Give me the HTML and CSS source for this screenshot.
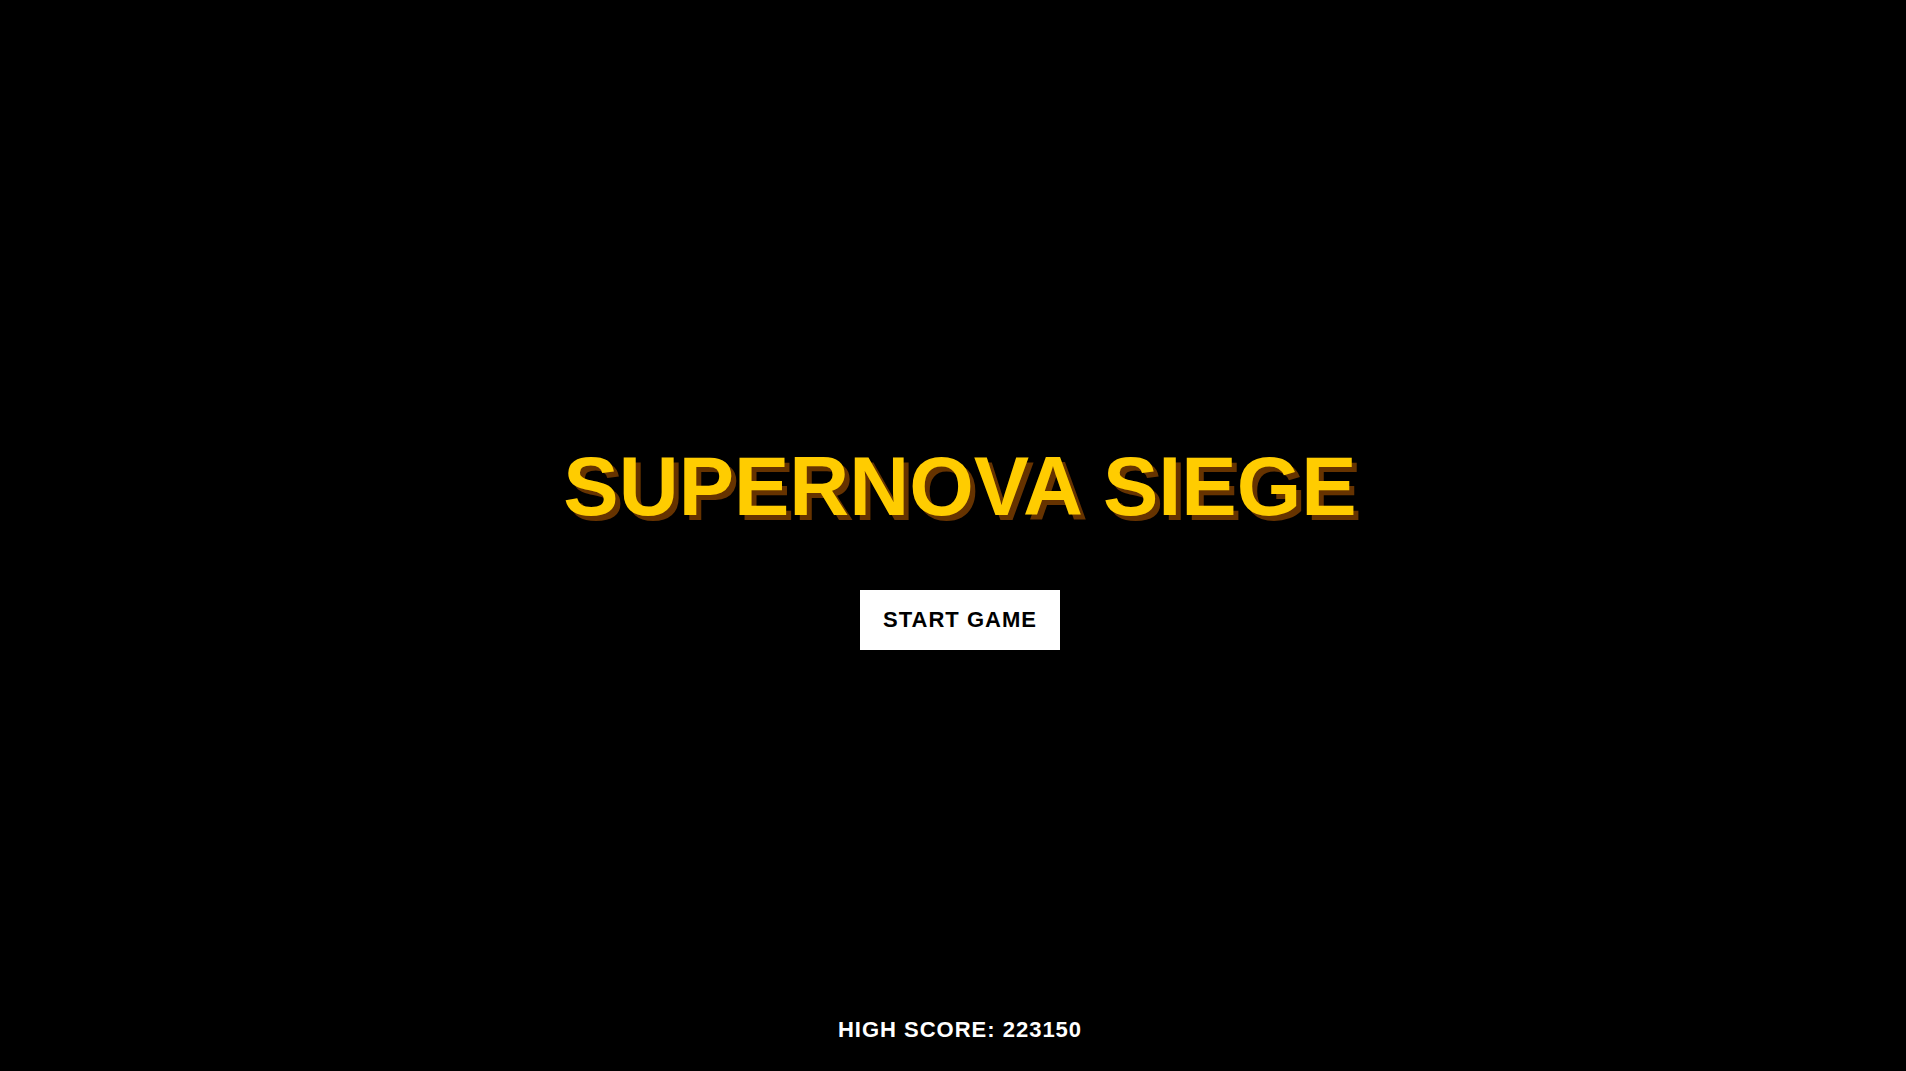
FILE: index.html
```html
<!DOCTYPE html>
<html lang="en">
<head>
<meta charset="utf-8">
<title>Supernova Siege</title>
<link rel="stylesheet" href="styles.css">
</head>
<body>
<div class="screen">
  <main class="menu">
    <h1 class="title">SUPERNOVA SIEGE</h1>
    <button class="start-btn" type="button">START GAME</button>
  </main>
  <footer class="high-score">HIGH SCORE: 223150</footer>
</div>
</body>
</html>
```

FILE: styles.css
```css
html, body {
  margin: 0;
  padding: 0;
  background: #000;
  height: 100%;
}

body {
  font-family: "Liberation Sans", Arial, Helvetica, sans-serif;
  color: #fff;
}

.screen {
  box-sizing: border-box;
  height: 100vh;
  padding-left: 14px;
  display: flex;
  flex-direction: column;
}

.menu {
  flex: 1;
  display: flex;
  flex-direction: column;
  align-items: center;
  justify-content: center;
  padding-top: 78px;
}

.title {
  margin: 0;
  font-size: 83px;
  line-height: 1;
  font-weight: 700;
  letter-spacing: 0;
  color: #ffcc00;
  text-shadow: 5px 5px 0 #663300;
}

.start-btn {
  margin-top: 62px;
  width: 200px;
  height: 60px;
  border: none;
  background: #fff;
  color: #000;
  font-family: "Liberation Sans", Arial, Helvetica, sans-serif;
  font-size: 22px;
  font-weight: 700;
  letter-spacing: 1px;
  padding: 0;
  cursor: pointer;
}

.high-score {
  text-align: center;
  font-size: 22px;
  font-weight: 700;
  letter-spacing: 1px;
  padding-bottom: 28px;
}
```
